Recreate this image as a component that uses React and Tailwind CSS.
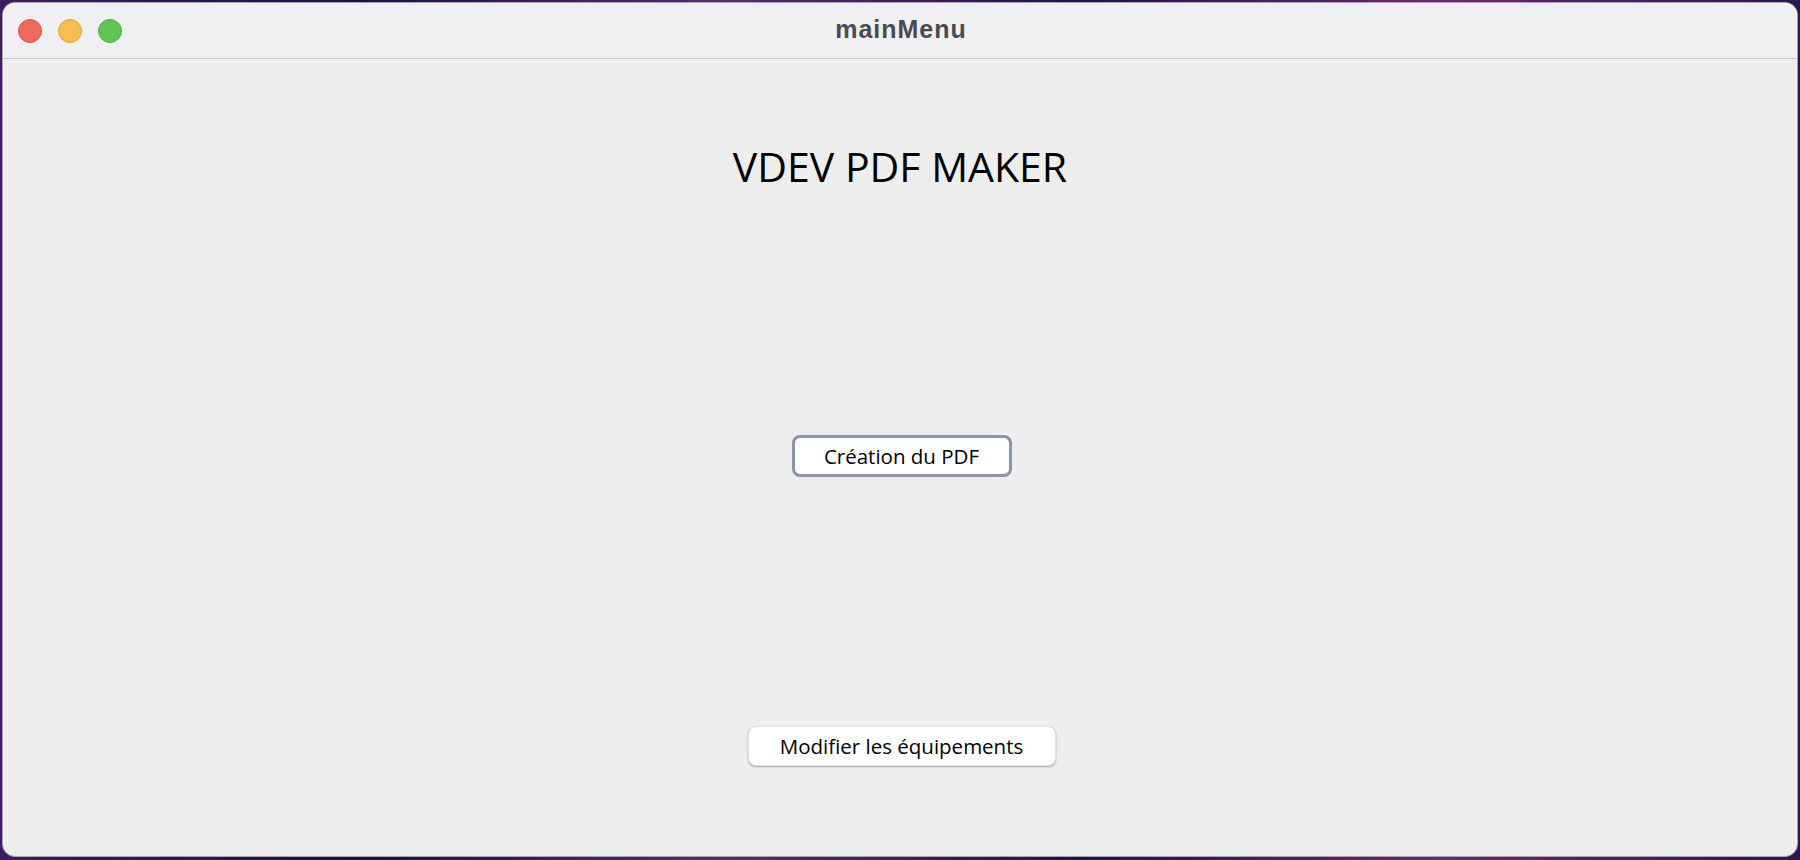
export default function App() {
  return (
    <div className="w-[1800px] h-[860px] overflow-hidden bg-[linear-gradient(90deg,#3a1f5c_0%,#1a1040_20%,#5a2a6e_40%,#20124a_60%,#6b2a6a_80%,#2a1650_100%)] pt-[2px] px-[2px]">
      <div className="relative h-[855px] w-[1796px] rounded-[13px] overflow-hidden bg-[#eeeeee] border border-[#a7a7a9] flex flex-col">
        <div className="relative h-[56px] shrink-0 bg-[#f0f0f2] border-b border-[#c9c9cb] flex items-center">
          <div className="flex items-center gap-[16px] ml-[15px]">
            <div className="w-[24px] h-[24px] rounded-full bg-[#ee6a5f] border border-[#d4574d]" />
            <div className="w-[24px] h-[24px] rounded-full bg-[#f5be4f] border border-[#d9a63f]" />
            <div className="w-[24px] h-[24px] rounded-full bg-[#61c554] border border-[#52ad45]" />
          </div>
          <div className="absolute inset-0 flex items-center justify-center pointer-events-none">
            <span className="text-[25px] font-bold tracking-[1px] text-[#4b4b4d] leading-none pl-[2px] mb-[2px]" style={{ fontFamily: '"Liberation Sans", Arial, sans-serif' }}>
              mainMenu
            </span>
          </div>
        </div>
        <div className="flex flex-col items-center" style={{ fontFamily: '"Open Sans", "DejaVu Sans", sans-serif' }}>
          <h1 className="mt-[86px] h-[42px] text-[41px] leading-none text-black font-normal ml-[0px] pt-[1px]">
            VDEV PDF MAKER
          </h1>
          <button className="mt-[248px] ml-[3px] w-[220px] h-[42px] rounded-[8px] bg-white border-[3px] border-[#8b95a8] flex items-center justify-center text-[20.5px] leading-none text-black">
            Création du PDF
          </button>
          <button className="mt-[249px] ml-[3px] w-[308px] h-[40px] rounded-[8px] bg-white shadow-[0_1px_2px_rgba(0,0,0,0.3)] border border-[#e2e2e2] flex items-center justify-center text-[20.5px] leading-none text-black">
            Modifier les équipements
          </button>
        </div>
      </div>
    </div>
  );
}
